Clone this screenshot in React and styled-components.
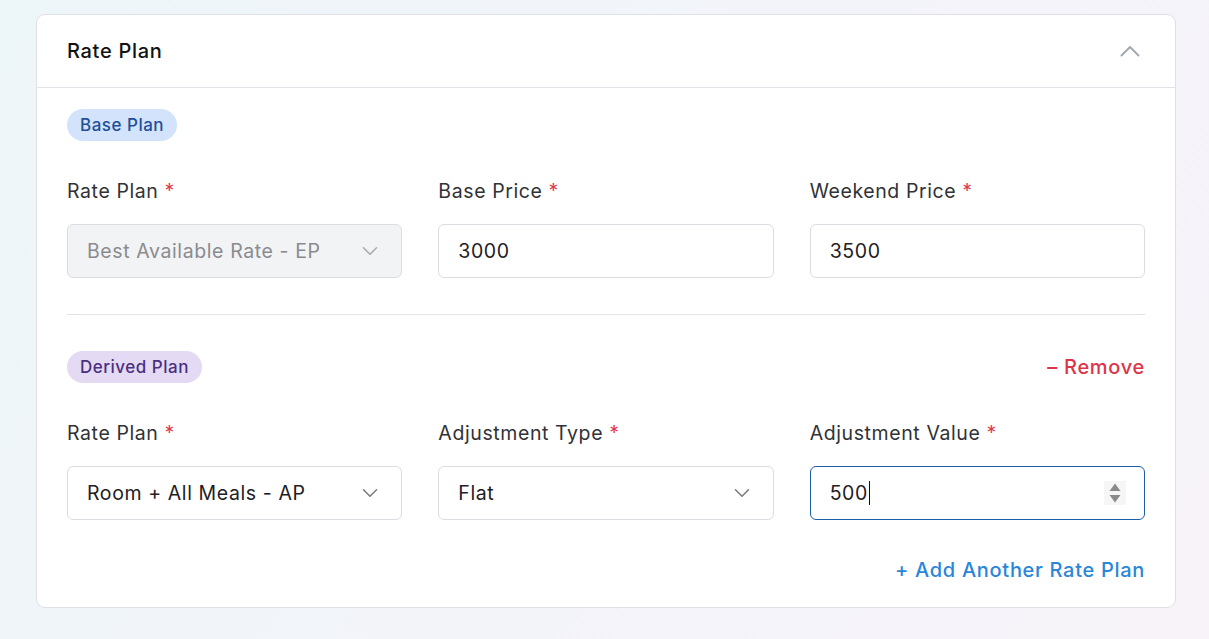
import React from "react";
import styled, { createGlobalStyle } from "styled-components";

const Global = createGlobalStyle`
  * { box-sizing: border-box; }
  html, body { margin: 0; padding: 0; }
  body {
    font-family: Inter, "Noto Sans", sans-serif;
    background: linear-gradient(120deg, #edf6f9 0%, #f3f4fa 55%, #f7f3f9 100%);
    min-height: 639px;
    color: #2b2d31;
  }
`;

const Page = styled.div`
  padding: 14px 33px 31px 36px;
`;

const Card = styled.section`
  background: #fff;
  border: 1px solid #dfe0e6;
  border-radius: 9px;
`;

const CardHeader = styled.header`
  height: 73px;
  display: flex;
  align-items: center;
  justify-content: space-between;
  padding: 0 35px 0 30px;
  border-bottom: 1px solid #e2e3e8;
`;

const Title = styled.h2`
  margin: 0;
  font-size: 20px;
  font-weight: 450;
  color: #111214;
  letter-spacing: 0.7px;
`;

const CardBody = styled.div`
  padding: 21px 30px 25px 30px;
`;

const BadgeRow = styled.div`
  display: flex;
  align-items: center;
  justify-content: space-between;
  height: 32px;
`;

const Badge = styled.span`
  display: inline-flex;
  align-items: center;
  height: 32px;
  padding: 0 13px;
  border-radius: 16px;
  font-size: 17px;
  font-weight: 450;
  letter-spacing: 0.5px;
  background: ${(p) => (p.$tone === "purple" ? "#e4daf3" : "#d2e3fb")};
  color: ${(p) => (p.$tone === "purple" ? "#4b2f80" : "#1f4f98")};
`;

const FieldGrid = styled.div`
  display: grid;
  grid-template-columns: repeat(3, 1fr);
  column-gap: 36px;
  margin-top: 36px;
`;

const FieldGroup = styled.div`
  display: flex;
  flex-direction: column;
  gap: 19px;
`;

const Label = styled.label`
  font-size: 19.5px;
  line-height: 28px;
  color: #303236;
  letter-spacing: 0.6px;
`;

const Required = styled.span`
  color: #e0394e;
  margin-left: 6px;
`;

const Field = styled.div`
  height: 54px;
  display: flex;
  align-items: center;
  justify-content: space-between;
  padding: 0 23px 0 19px;
  border-radius: 6px;
  border: 1px solid ${(p) => (p.$focused ? "#1c5ea7" : "#dcdde3")};
  background: ${(p) => (p.$disabled ? "#f2f3f5" : "#fff")};
  color: ${(p) => (p.$disabled ? "#8a8b8f" : "#1e2024")};
  font-size: 19.5px;
  letter-spacing: 0.6px;
`;

const Value = styled.span`
  display: inline-flex;
  align-items: center;
`;

const Caret = styled.span`
  display: inline-block;
  width: 1px;
  height: 24px;
  background: #111;
  margin-left: 1px;
`;

const Spinner = styled.span`
  display: flex;
  flex-direction: column;
  align-items: center;
  justify-content: center;
  gap: 4px;
  width: 22px;
  height: 24px;
  margin-right: -5px;
  background: #f6f6f7;
`;

const Divider = styled.hr`
  border: none;
  border-top: 1px solid #e2e3e8;
  margin: 36px 0 36px;
`;

const TextButton = styled.button`
  border: none;
  background: none;
  padding: 0;
  font-family: inherit;
  font-size: 20px;
  font-weight: 500;
  letter-spacing: 0.7px;
  cursor: pointer;
  color: ${(p) => (p.$danger ? "#de3449" : "#2a86d9")};
`;

const Footer = styled.div`
  display: flex;
  justify-content: flex-end;
  margin-top: 38px;
  line-height: 28px;
`;

const ChevronDown = ({ color = "#7b7c80" }) => (
  <svg width="16" height="10" viewBox="0 0 16 10" fill="none">
    <path d="M1.5 1.8l6.5 6.4 6.5-6.4" stroke={color} strokeWidth="1.6" strokeLinecap="round" strokeLinejoin="round" />
  </svg>
);

const ChevronUp = () => (
  <svg width="20" height="12" viewBox="0 0 20 12" fill="none">
    <path d="M1.5 10.5l8.5-8.5 8.5 8.5" stroke="#a2a9b1" strokeWidth="2" strokeLinecap="round" strokeLinejoin="round" />
  </svg>
);

const SpinArrows = () => (
  <Spinner>
    <svg width="12" height="8" viewBox="0 0 12 8"><path d="M6 0.5L11.5 8H0.5z" fill="#8b8b8e" /></svg>
    <svg width="12" height="8" viewBox="0 0 12 8"><path d="M0.5 0h11L6 7.5z" fill="#8b8b8e" /></svg>
  </Spinner>
);

const FormField = ({ label, children }) => (
  <FieldGroup>
    <Label>
      {label}
      <Required>*</Required>
    </Label>
    {children}
  </FieldGroup>
);

export default function App() {
  return (
    <>
      <Global />
      <Page>
        <Card>
          <CardHeader>
            <Title>Rate Plan</Title>
            <ChevronUp />
          </CardHeader>
          <CardBody>
            <BadgeRow>
              <Badge>Base Plan</Badge>
            </BadgeRow>
            <FieldGrid>
              <FormField label="Rate Plan">
                <Field $disabled>
                  <Value>Best Available Rate - EP</Value>
                  <ChevronDown color="#a9aaae" />
                </Field>
              </FormField>
              <FormField label="Base Price">
                <Field>
                  <Value>3000</Value>
                </Field>
              </FormField>
              <FormField label="Weekend Price">
                <Field>
                  <Value>3500</Value>
                </Field>
              </FormField>
            </FieldGrid>

            <Divider />

            <BadgeRow>
              <Badge $tone="purple">Derived Plan</Badge>
              <TextButton $danger>– Remove</TextButton>
            </BadgeRow>
            <FieldGrid>
              <FormField label="Rate Plan">
                <Field>
                  <Value>Room + All Meals - AP</Value>
                  <ChevronDown />
                </Field>
              </FormField>
              <FormField label="Adjustment Type">
                <Field>
                  <Value>Flat</Value>
                  <ChevronDown />
                </Field>
              </FormField>
              <FormField label="Adjustment Value">
                <Field $focused>
                  <Value>
                    500
                    <Caret />
                  </Value>
                  <SpinArrows />
                </Field>
              </FormField>
            </FieldGrid>

            <Footer>
              <TextButton>+ Add Another Rate Plan</TextButton>
            </Footer>
          </CardBody>
        </Card>
      </Page>
    </>
  );
}
